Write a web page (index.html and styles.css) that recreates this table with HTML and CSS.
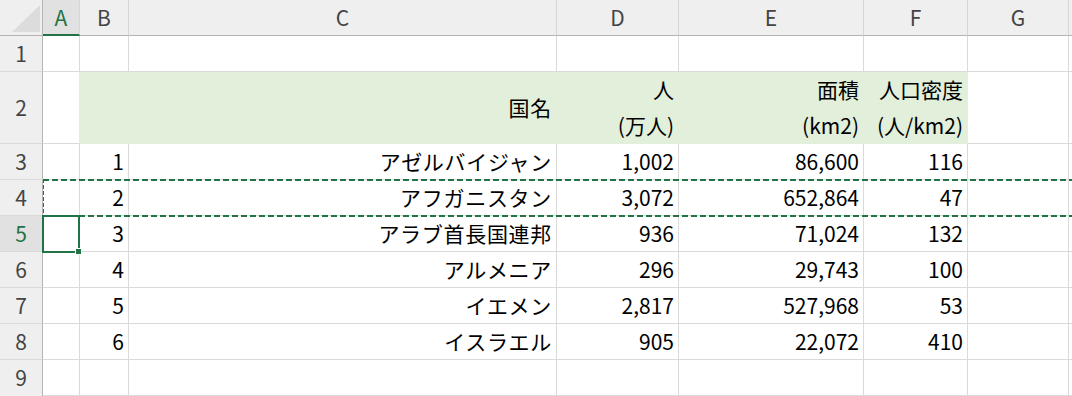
FILE: index.html
```html
<!DOCTYPE html>
<html lang="ja">
<head>
<meta charset="utf-8">
<title>Sheet</title>
<link rel="stylesheet" href="styles.css">
</head>
<body>
<div class="sheet">
  <div class="corner"><svg width="42" height="35" viewBox="0 0 42 35"><polygon points="12,32 40,32 40,5" fill="#dcdcdc"/></svg></div>
  <div class="ch active">A</div>
  <div class="ch">B</div>
  <div class="ch">C</div>
  <div class="ch">D</div>
  <div class="ch">E</div>
  <div class="ch">F</div>
  <div class="ch">G</div>
  <div class="ch"></div>

  <div class="rh">1</div>
  <div class="c"></div><div class="c"></div><div class="c"></div><div class="c"></div><div class="c"></div><div class="c"></div><div class="c"></div><div class="c"></div>

  <div class="rh">2</div>
  <div class="c edge"></div>
  <div class="c fill"></div>
  <div class="c fill jp">国名</div>
  <div class="c fill"><span>人<br>(万人)</span></div>
  <div class="c fill"><span>面積<br>(km2)</span></div>
  <div class="c fill"><span>人口密度<br>(人/km2)</span></div>
  <div class="c"></div><div class="c"></div>

  <div class="rh">3</div>
  <div class="c"></div><div class="c">1</div><div class="c jp">アゼルバイジャン</div><div class="c">1,002</div><div class="c">86,600</div><div class="c">116</div><div class="c"></div><div class="c"></div>

  <div class="rh">4</div>
  <div class="c"></div><div class="c">2</div><div class="c jp">アフガニスタン</div><div class="c">3,072</div><div class="c">652,864</div><div class="c">47</div><div class="c"></div><div class="c"></div>

  <div class="rh active">5</div>
  <div class="c"></div><div class="c">3</div><div class="c jp">アラブ首長国連邦</div><div class="c">936</div><div class="c">71,024</div><div class="c">132</div><div class="c"></div><div class="c"></div>

  <div class="rh">6</div>
  <div class="c"></div><div class="c">4</div><div class="c jp">アルメニア</div><div class="c">296</div><div class="c">29,743</div><div class="c">100</div><div class="c"></div><div class="c"></div>

  <div class="rh">7</div>
  <div class="c"></div><div class="c">5</div><div class="c jp">イエメン</div><div class="c">2,817</div><div class="c">527,968</div><div class="c">53</div><div class="c"></div><div class="c"></div>

  <div class="rh">8</div>
  <div class="c"></div><div class="c">6</div><div class="c jp">イスラエル</div><div class="c">905</div><div class="c">22,072</div><div class="c">410</div><div class="c"></div><div class="c"></div>

  <div class="rh last">9</div>
  <div class="c"></div><div class="c"></div><div class="c"></div><div class="c"></div><div class="c"></div><div class="c"></div><div class="c"></div><div class="c"></div>

  <div class="marquee"></div>
  <div class="sel"><div class="handle"></div></div>
</div>
</body>
</html>
```
FILE: styles.css
```css
* { box-sizing: border-box; }
html, body { margin: 0; padding: 0; background: #fff; }
body { width: 1072px; height: 396px; overflow: hidden; }

.sheet {
  position: relative;
  display: grid;
  grid-template-columns: 43px 37px 49px 428px 122px 185px 104px 101px 1fr;
  grid-template-rows: 36px 36px 72px repeat(7, 36px);
  font-family: "Noto Sans CJK JP", sans-serif;
  font-size: 21px;
  color: #000;
}

.corner {
  background: #efefef;
  border-right: 1px solid #b4b4b4;
  border-bottom: 1px solid #b4b4b4;
  display: flex;
}

.ch {
  background: #efefef;
  color: #444;
  border-right: 1px solid #d6d6d6;
  border-bottom: 1px solid #b4b4b4;
  display: flex;
  align-items: center;
  justify-content: center;
  line-height: 34px;
  padding-bottom: 1px;
}
.ch.active {
  background: #e1e1e1;
  color: #217346;
  border-bottom: 2px solid #217346;
}

.rh {
  background: #efefef;
  color: #444;
  border-right: 1px solid #b4b4b4;
  border-bottom: 1px solid #dadada;
  display: flex;
  align-items: center;
  justify-content: center;
  padding-bottom: 2px;
}
.rh.last { border-bottom: none; }
.rh.active {
  background: #e1e1e1;
  color: #217346;
}

.c {
  border-right: 1px solid #dadada;
  border-bottom: 1px solid #dadada;
  display: flex;
  align-items: center;
  justify-content: flex-end;
  text-align: right;
  padding: 0 4px 2px 0;
  line-height: 36px;
  white-space: nowrap;
  overflow: hidden;
}
.c.jp { letter-spacing: 0.7px; padding-right: 4px; }
.c.fill {
  background: #e2efda;
  border-color: #e2efda;
}
.c.edge { border-right-color: #e2efda; }

.marquee {
  position: absolute;
  grid-row: 5 / 6;
  grid-column: 2 / 10;
  top: -1px;
  bottom: -1px;
  left: 0;
  right: 0;
  background:
    repeating-linear-gradient(90deg, #217346 0 6px, transparent 6px 9px) left top / 100% 2px no-repeat,
    repeating-linear-gradient(90deg, #217346 0 6px, transparent 6px 9px) left bottom / 100% 2px no-repeat,
    repeating-linear-gradient(180deg, #217346 0 4px, transparent 4px 6px) left top / 1px 100% no-repeat;
  pointer-events: none;
}

.sel {
  position: absolute;
  grid-row: 6 / 7;
  grid-column: 2 / 3;
  top: -1px;
  bottom: -1px;
  left: -1px;
  right: 0;
  border: 2px solid #217346;
}
.handle {
  position: absolute;
  left: 31px;
  top: 31px;
  width: 7px;
  height: 7px;
  background: #217346;
  border: 1px solid #fff;
}
```
